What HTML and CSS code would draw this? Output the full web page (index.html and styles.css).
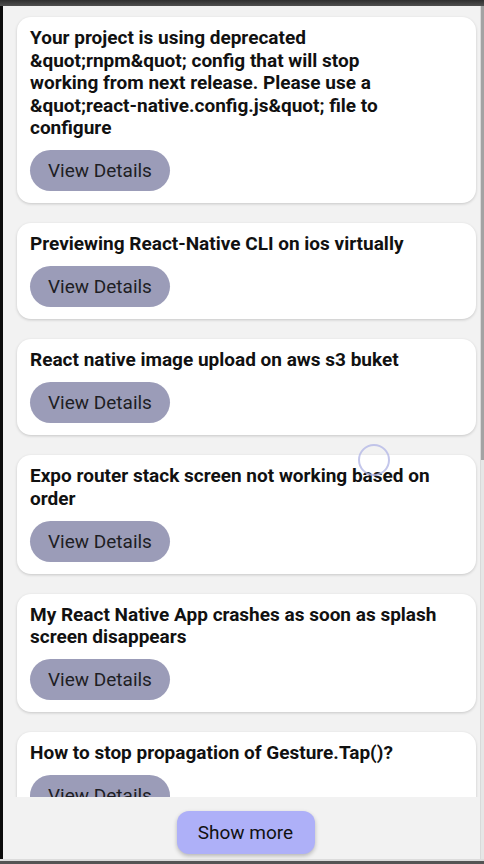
FILE: index.html
```html
<!DOCTYPE html>
<html lang="en">
<head>
<meta charset="utf-8">
<title>Questions</title>
<link rel="stylesheet" href="styles.css">
</head>
<body>
<div class="screen">
  <div class="topbar"></div>
  <div class="middle">
    <div class="edge-left"></div>
    <div class="content">
      <div class="list">
        <div class="card">
          <div class="title">Your project is using deprecated<br>&amp;quot;rnpm&amp;quot; config that will stop<br>working from next release. Please use a<br><span class="nowrap">&amp;quot;react-native.config.js&amp;quot;</span> file to<br>configure</div>
          <button class="details">View Details</button>
        </div>
        <div class="card">
          <div class="title">Previewing React-Native CLI on ios virtually</div>
          <button class="details">View Details</button>
        </div>
        <div class="card">
          <div class="title">React native image upload on aws s3 buket</div>
          <button class="details">View Details</button>
        </div>
        <div class="card">
          <div class="title">Expo router stack screen not working based on order</div>
          <button class="details">View Details</button>
        </div>
        <div class="card">
          <div class="title">My React Native App crashes as soon as splash screen disappears</div>
          <button class="details">View Details</button>
        </div>
        <div class="card">
          <div class="title">How to stop propagation of Gesture.Tap()?</div>
          <button class="details">View Details</button>
        </div>
      </div>
      <div class="footer">
        <button class="more">Show more</button>
      </div>
    </div>
    <div class="edge-right"><div class="thumb"></div></div>
  </div>
  <div class="bottombar"></div>
  <div class="touch"></div>
</div>
</body>
</html>
```
FILE: styles.css
```css
html, body {
  margin: 0;
  padding: 0;
  background: #f2f2f2;
}
.screen {
  position: relative;
  width: 484px;
  height: 864px;
  display: flex;
  flex-direction: column;
  overflow: hidden;
  font-family: Roboto, "Liberation Sans", sans-serif;
  background: #f2f2f2;
}
.topbar {
  height: 6px;
  flex: none;
  background: linear-gradient(#2f2f2f, #4f4f4f);
}
.middle {
  flex: 1;
  display: flex;
  min-height: 0;
}
.edge-left {
  width: 3px;
  flex: none;
  background: #0c0c0c;
}
.edge-right {
  width: 4px;
  flex: none;
  display: flex;
  flex-direction: column;
  background: #e6e6e6;
  border-left: 1px solid #d9d9d9;
  box-sizing: border-box;
}
.thumb {
  height: 454px;
  background: #a3a3a3;
}
.content {
  flex: 1;
  display: flex;
  flex-direction: column;
  min-width: 0;
}
.list {
  flex: 1;
  min-height: 0;
  overflow: hidden;
  padding: 11px 4px 0 14px;
  display: flex;
  flex-direction: column;
  gap: 20px;
}
.card {
  flex: none;
  background: #ffffff;
  border-radius: 14px;
  box-shadow: 0 1px 3px rgba(0, 0, 0, 0.18);
  padding: 10px 13px 12px;
}
.title {
  font-size: 19px;
  font-weight: 700;
  line-height: 22.5px;
  color: #111111;
  margin-bottom: 10.5px;
  margin-right: 18px;
}
.nowrap {
  white-space: nowrap;
}
.details {
  display: block;
  height: 41px;
  padding: 0 18px;
  border: none;
  border-radius: 21px;
  background: #9b9cb8;
  color: #1e1e24;
  font-family: Roboto, "Liberation Sans", sans-serif;
  font-size: 19px;
  font-weight: 400;
}
.footer {
  flex: none;
  height: 62px;
  display: flex;
  justify-content: center;
  align-items: flex-start;
  padding-top: 14px;
  box-sizing: border-box;
  background: #f2f2f2;
}
.more {
  width: 138px;
  height: 43px;
  border: none;
  border-radius: 12px;
  background: #aeb0f8;
  color: #111111;
  font-family: Roboto, "Liberation Sans", sans-serif;
  font-size: 19px;
  box-shadow: 0 2px 4px rgba(0, 0, 0, 0.25);
  margin-left: 8px;
}
.bottombar {
  height: 3px;
  flex: none;
  background: #545454;
  border-top: 2px solid #dcdcdc;
}
.touch {
  position: absolute;
  left: 358px;
  top: 444px;
  width: 28px;
  height: 28px;
  border-radius: 50%;
  border: 2px solid rgba(180, 184, 230, 0.8);
}
```
